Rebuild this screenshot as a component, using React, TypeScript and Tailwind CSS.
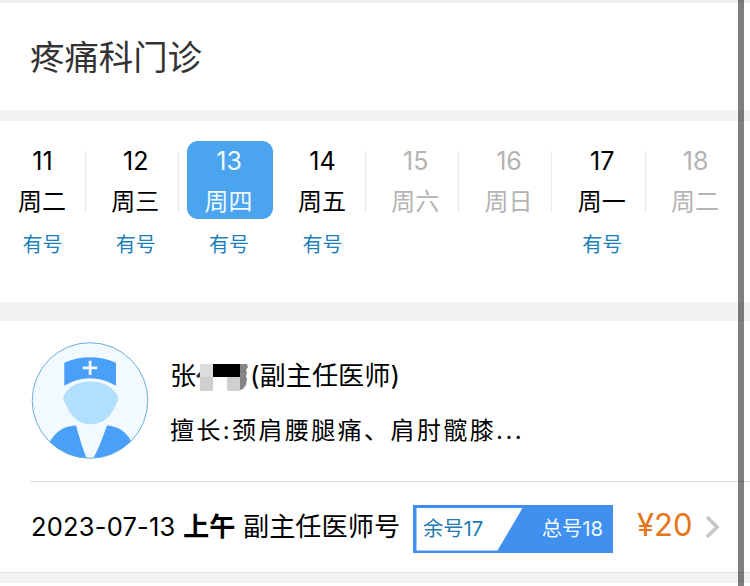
import React from "react";

type Day = { date: string; week: string; open: boolean; active?: boolean };

const days: Day[] = [
  { date: "11", week: "周二", open: true },
  { date: "12", week: "周三", open: true },
  { date: "13", week: "周四", open: true, active: true },
  { date: "14", week: "周五", open: true },
  { date: "15", week: "周六", open: false },
  { date: "16", week: "周日", open: false },
  { date: "17", week: "周一", open: true },
  { date: "18", week: "周二", open: false },
];

function DayCell({ day, last }: { day: Day; last: boolean }) {
  const tone = day.active
    ? "bg-[#4aa4ee] text-[#f1faff]"
    : day.open
      ? "text-black"
      : "text-[#b3b3b3]";
  return (
    <div className="w-[86px] shrink-0 text-center">
      <div className={`relative h-[78px] rounded-[11px] pt-1 ${tone}`}>
        <div className="h-8 pr-px text-[25px] leading-8">{day.date}</div>
        <div className="mt-[9px] h-8 pr-[2px] text-[24px] leading-8">{day.week}</div>
        {!day.active && !last && (
          <span className="absolute right-0 top-[10px] h-[61px] w-px bg-[#e9e9e9]" />
        )}
      </div>
      {day.open && (
        <div className="mt-3 pr-px text-[20px] leading-7 text-[#1c7fba]">有号</div>
      )}
    </div>
  );
}

function Avatar() {
  return (
    <svg className="block h-[118px] w-[118px] shrink-0" viewBox="0 0 118 118">
      <defs>
        <clipPath id="face">
          <circle cx="59" cy="58.5" r="57.8" />
        </clipPath>
      </defs>
      <circle cx="59" cy="58.5" r="57.8" fill="#f2f9ff" />
      <g clipPath="url(#face)">
        <path d="M33.3 20.7Q59 10 85 20.7V43.7Q59 29 33.3 43.7Z" fill="#4a9ff8" />
        <path d="M57.7 18.700h2.800v5.700H66.300v2.800H60.500V33h-2.800v-5.800H51.700v-2.800h6Z" fill="#f0f9ff" />
        <path
          d="M32.300 55C36 45 47 39.500 59.500 39.500C72 39.500 83 45 87.300 55C87.800 58 86.500 60 85 62.500C81 73 73 82.500 59.500 82.500C47 82.500 39 73 35 63C33.500 60 32 58 32.300 55Z"
          fill="#b3dfff"
        />
        <path
          d="M18 101C25 89 33 84 45 83.500Q49 98 55 115L59 118L63 115Q69 103 76 83.500C87 84 96 90 101 101L98 118H20Z"
          fill="#4a9ff8"
        />
        <path d="M45 82.500C49 95 52 112 58 115.500H61C67 111 71 95 76 82.500Z" fill="#f2f9ff" />
      </g>
      <circle cx="59" cy="58.500" r="57.800" fill="none" stroke="#6aadda" />
    </svg>
  );
}

function Mosaic() {
  return (
    <svg className="mt-[14px] block h-[28px] w-[54px] shrink-0" viewBox="0 0 54 28">
      <path d="M0 13L4 9V14L2 15Z" fill="#333" />
      <path d="M4 1H17V14H16V28H4Z" fill="#dcdcdc" />
      <path d="M4 14H17V28H4Z" fill="#cfcfcf" />
      <path d="M17 14H31V28H17Z" fill="#fff" />
      <path d="M31 14H44V28H31Z" fill="#d0d0d0" />
      <path d="M17 1H44V14H17Z" fill="#000" />
      <path d="M44 1H51L52 4L50 7L51 10L50 13L51 16L50 22L47 26L44 27Z" fill="#858585" />
      <path d="M44 8H50M44 17H49" stroke="#777" />
    </svg>
  );
}

export default function App() {
  return (
    <div
      className="relative h-[586px] w-[750px] overflow-hidden whitespace-nowrap bg-white text-black"
      style={{ fontFamily: 'Inter, "Noto Sans CJK SC", sans-serif' }}
    >
      <div className="h-[3px] bg-[#eeeeee]" />
      <header className="flex h-[107px] items-center px-[30px] pt-[2px] text-[34.400px] text-[#333]">
        <h1>疼痛科门诊</h1>
      </header>
      <div className="h-[11px] bg-[#f2f2f2]" />
      <section className="flex h-[181px] gap-[7.300px] pt-5">
        {days.map((d, i) => (
          <DayCell key={i} day={d} last={i === days.length - 1} />
        ))}
      </section>
      <div className="h-[19px] bg-[#f2f2f2]" />
      <section className="flex h-[160px] pl-[31px] pt-[21px]">
        <Avatar />
        <div className="ml-[21px] pt-[7px]">
          <div className="flex h-[55px] text-[26.200px] leading-[54px]">
            <span className="w-[26px] shrink-0">张</span>
            <Mosaic />
            <span>(副主任医师)</span>
          </div>
          <div className="text-[24px] leading-[54px] tracking-[2.400px]">
            擅长:颈肩腰腿痛、肩肘髋膝...
          </div>
        </div>
      </section>
      <div className="ml-[30px] h-px bg-[#dedede]" />
      <section className="flex h-[90px] items-center pl-[31px]">
        <div className="flex w-[382px] shrink-0 items-baseline text-[26.200px]">
          <span className="w-[152px] text-[25.500px] tracking-[0.200px]">2023-07-13</span>
          <b className="w-[60px]">上午</b>
          <span>副主任医师号</span>
        </div>
        <div className="relative mt-1 flex h-12 w-[200px] shrink-0 items-center justify-between pl-[10px] pr-[10px] text-[20.300px]">
          <svg className="absolute inset-0" width="200" height="48" viewBox="0 0 200 48">
            <path d="M0 0H200V48H0Z" fill="#4090ef" />
            <path d="M3.500 3H109.500L84.500 45.500H3.500Z" fill="#fff" />
          </svg>
          <span className="relative text-[#217ab0]">余号17</span>
          <span className="relative text-[#f0faff]">总号18</span>
        </div>
        <span className="-mt-1 ml-6 w-[68px] shrink-0 text-[31px] text-[#e57518]">¥20</span>
        <svg className="block h-6 w-4 shrink-0" viewBox="0 0 16 24" fill="none" stroke="#c6c6c6" strokeWidth="3.500">
          <path d="M2 2L12 12L2 22" />
        </svg>
      </section>
      <div className="h-[11px] border-t border-[#dfdfdf] bg-[#f2f2f2]" />
      <div className="absolute right-[6px] top-0 h-full w-[6px] bg-black/50" />
    </div>
  );
}
